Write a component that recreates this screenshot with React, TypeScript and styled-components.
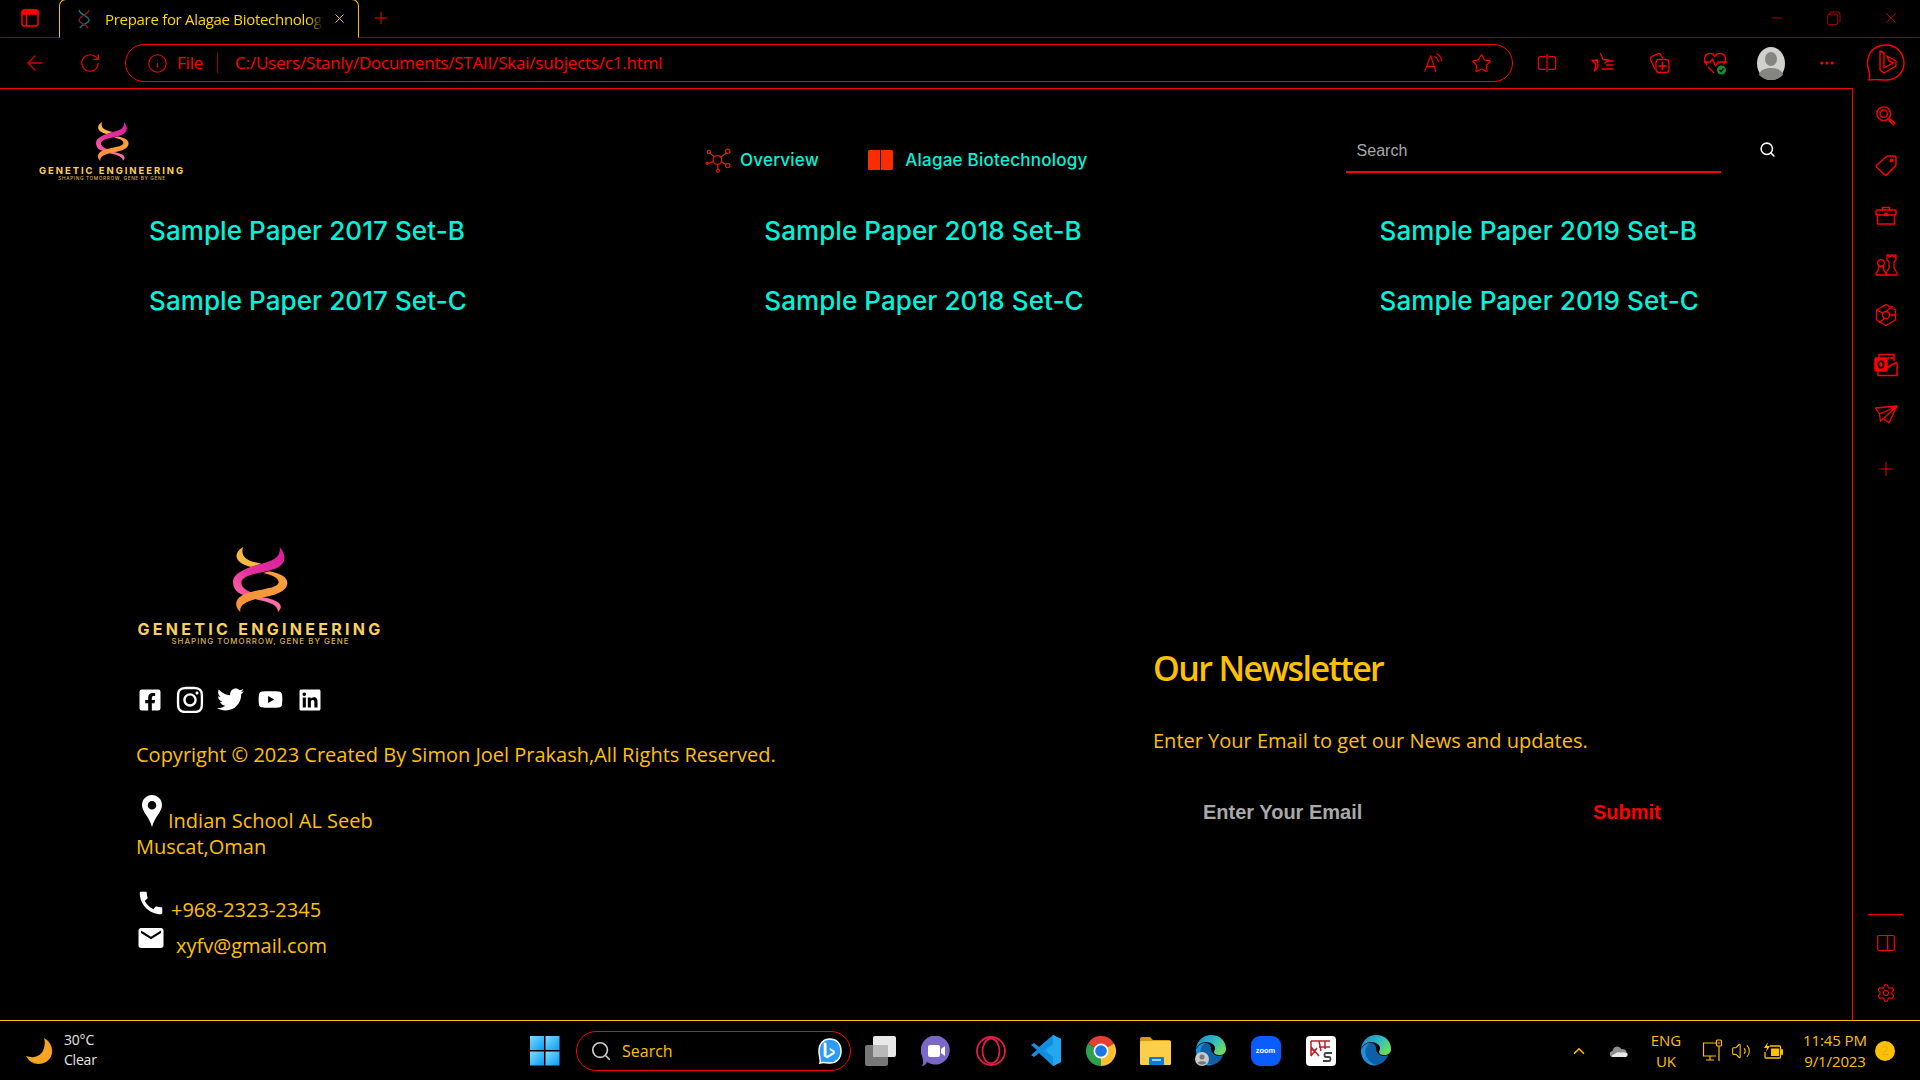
import React from 'react'
import styled, { createGlobalStyle } from 'styled-components'
import {
  ArrowLeft, RotateCw, Info, Plus, X, Minus, Star, Search as SearchIcon, Ellipsis, ChevronUp, Settings, Volume2,
} from 'lucide-react'
import { FaFacebookSquare, FaInstagram, FaTwitter, FaYoutube, FaLinkedin } from 'react-icons/fa'
import { MdCall, MdEmail } from 'react-icons/md'

const RED = '#ff0000'
const GOLD = '#ffc000'
const CYAN = '#00f4dc'
const CHROME_FONT = '"Open Sans", "Noto Sans", sans-serif'

const GlobalStyle = createGlobalStyle`
  html, body { margin: 0; padding: 0; background: #000; }
  body { width: 1920px; height: 1080px; overflow: hidden; font-family: "Open Sans", sans-serif; }
  * { box-sizing: border-box; }
`

const Shell = styled.div`
  width: 1920px;
  height: 1080px;
  display: flex;
  flex-direction: column;
  background: #000;
`

/* ---- window chrome ---- */

const TitleBar = styled.div`
  height: 38px;
  flex: none;
  display: flex;
  align-items: flex-end;
  border-bottom: 1px solid #3c2c00;
`

const WindowMenu = styled.div`
  width: 59px;
  height: 38px;
  display: flex;
  align-items: center;
  justify-content: center;
`

const Tab = styled.div`
  width: 300px;
  height: 39px;
  margin-bottom: -1px;
  display: flex;
  align-items: center;
  padding: 0 11px 0 18px;
  border: 1px solid ${GOLD};
  border-bottom: 1px solid #000;
  border-radius: 7px 7px 0 0;
  background: #000;
`

const TabTitle = styled.span`
  flex: 1;
  margin: 0 8px 0 15px;
  overflow: hidden;
  white-space: nowrap;
  color: #ffd800;
  font: 15px/20px ${CHROME_FONT};
  letter-spacing: -0.3px;
  mask-image: linear-gradient(to right, #000 92%, transparent);
`

const NewTab = styled.div`
  width: 44px;
  height: 38px;
  display: flex;
  align-items: center;
  justify-content: center;
`

const WindowControls = styled.div`
  margin-left: auto;
  height: 38px;
  display: flex;
  align-items: center;
  padding-right: 1px;
`

const WindowButton = styled.div`
  width: 57px;
  display: flex;
  justify-content: center;
`

const Toolbar = styled.div`
  height: 50px;
  flex: none;
  display: flex;
  align-items: center;
  padding-left: 12px;
`

const NavButton = styled.div`
  width: 46px;
  display: flex;
  justify-content: center;
  margin-right: 9px;
`

const Omnibox = styled.div`
  width: 1388px;
  height: 38px;
  margin-left: 3px;
  display: flex;
  align-items: center;
  padding: 0 20px 0 21px;
  border: 1px solid ${RED};
  border-radius: 19px;
  color: ${RED};
  font: 17px/22px ${CHROME_FONT};
`

const FileLabel = styled.span`
  margin-left: 9px;
  letter-spacing: -0.2px;
`

const Divider = styled.span`
  width: 1px;
  height: 20px;
  margin: 0 17px 0 14px;
  background: #9c0000;
`

const UrlText = styled.span`
  flex: 1;
  letter-spacing: -0.2px;
`

const OmniIcons = styled.div`
  display: flex;
  align-items: center;
  gap: 27px;
`

const ToolIcons = styled.div`
  display: flex;
  align-items: center;
  margin-left: 6px;
`

const ToolSlot = styled.div`
  width: 56px;
  display: flex;
  justify-content: center;
  align-items: center;
`

const BingSlot = styled(ToolSlot)`
  margin-left: 3px;
`

/* ---- page ---- */

const Middle = styled.div`
  flex: 1;
  min-height: 0;
  display: flex;
`

const Page = styled.main`
  width: 1853px;
  border-top: 1px solid ${RED};
  border-right: 1px solid ${RED};
  display: flex;
  flex-direction: column;
`

const Header = styled.header`
  height: 90px;
  flex: none;
  display: flex;
  align-items: flex-start;
  padding-left: 38px;
`

const HeaderLogo = styled.div`
  padding-top: 33px;
`

const LogoBox = styled.div<{ $width: number }>`
  width: ${(p) => p.$width}px;
  display: flex;
  flex-direction: column;
  align-items: center;
`

const LogoName = styled.div<{ $size: number }>`
  white-space: nowrap;
  color: #fbd05c;
  font: 700 ${(p) => p.$size}px/1 Inter, sans-serif;
  letter-spacing: ${(p) => p.$size * 0.205}px;
  margin-top: ${(p) => p.$size * 0.55}px;
`

const LogoTagline = styled.div<{ $size: number }>`
  white-space: nowrap;
  color: #d9b04e;
  font: 500 ${(p) => p.$size}px/1 Inter, sans-serif;
  letter-spacing: ${(p) => p.$size * 0.13}px;
  margin-top: ${(p) => p.$size * 0.12}px;
`

const TopNav = styled.nav`
  display: flex;
  align-items: center;
  margin: 58px 0 0 519px;
`

const NavItem = styled.a<{ $gap: number }>`
  display: flex;
  align-items: center;
  gap: ${(p) => p.$gap}px;
  margin-right: 49px;
  color: ${CYAN};
  font: 500 17px/20px Inter, sans-serif;
  letter-spacing: 0.25px;
`

const SearchBox = styled.div`
  width: 375px;
  height: 84px;
  margin-left: 209px;
  padding: 50px 11px 0;
  border-bottom: 2px solid ${RED};
  color: #aaa;
  font: 16px/24px "Liberation Sans", Arial, sans-serif;
`

const SearchButton = styled.div`
  margin: 52px 0 0 38px;
  width: 20px;
  color: #fff;
`

const Papers = styled.section`
  display: grid;
  grid-template-columns: repeat(3, 615.3px);
  grid-auto-rows: 70px;
  padding: 35px 0 0 149px;
`

const PaperLink = styled.a`
  color: ${CYAN};
  font: 500 26px/34px Inter, sans-serif;
  letter-spacing: 0.08px;
  white-space: nowrap;
`

const Footer = styled.footer`
  display: flex;
  margin-top: 193px;
`

const FooterLeft = styled.div`
  width: 1153px;
  padding-left: 136px;
  color: ${GOLD};
  font: 20px/26px "Open Sans", sans-serif;
`

const Socials = styled.div`
  display: flex;
  align-items: center;
  gap: 12px;
  margin: 39px 0 0;
  color: #fff;
  height: 30px;
`

const SocialSlot = styled.span`
  width: 28px;
  display: flex;
  justify-content: center;
`

const Copyright = styled.p`
  margin: 27px 0 0;
`

const Address = styled.address`
  margin-top: 27px;
  font-style: normal;
`

const AddressLine = styled.div`
  display: flex;
  align-items: flex-end;
`

const PinWrap = styled.span`
  display: flex;
  margin: 0 6px 7px 6px;
`

const ContactRow = styled.div<{ $gap: number; $top: number }>`
  display: flex;
  align-items: flex-end;
  gap: ${(p) => p.$gap}px;
  margin-top: ${(p) => p.$top}px;
`

const IconWhite = styled.span<{ $lift: number }>`
  display: flex;
  color: #fff;
  margin-bottom: ${(p) => p.$lift}px;
`

const Newsletter = styled.div`
  padding-top: 97px;
  color: ${GOLD};
`

const NewsTitle = styled.h2`
  margin: 0;
  font: 600 34px/48px "Open Sans", sans-serif;
  letter-spacing: -1.6px;
`

const NewsText = styled.p`
  margin: 35px 0 0;
  font: 20px/28px "Open Sans", sans-serif;
`

const NewsForm = styled.div`
  display: flex;
  margin-top: 44px;
  padding-left: 50px;
  font: 700 20px/26px "Liberation Sans", Arial, sans-serif;
`

const EmailHint = styled.span`
  width: 390px;
  color: #a9a9a9;
`

const SubmitText = styled.span`
  color: ${RED};
`

/* ---- edge sidebar ---- */

const Sidebar = styled.aside`
  flex: 1;
  display: flex;
  flex-direction: column;
  align-items: center;
  padding-right: 2px;
`

const SideStack = styled.div`
  display: flex;
  flex-direction: column;
  align-items: center;
  gap: 26px;
  padding-top: 17px;
`

const SideAdd = styled.div`
  display: flex;
  margin-top: 5px;
`

const SideRule = styled.div`
  width: 35px;
  height: 1px;
  margin-top: auto;
  background: ${RED};
`

const SideBottom = styled.div`
  display: flex;
  flex-direction: column;
  align-items: center;
  gap: 30px;
  padding: 18px 0 17px;
`

/* ---- taskbar ---- */

const Taskbar = styled.div`
  height: 60px;
  flex: none;
  display: flex;
  align-items: center;
  border-top: 1px solid ${GOLD};
`

const Weather = styled.div`
  width: 530px;
  display: flex;
  align-items: center;
  gap: 10px;
  padding-left: 26px;
`

const WeatherText = styled.div`
  color: #e6e6e6;
  font: 14px/20px ${CHROME_FONT};
  letter-spacing: -0.2px;
  margin-top: -2px;
`

const WinStart = styled.div`
  width: 46px;
  display: flex;
`

const TaskSearch = styled.div`
  width: 275px;
  height: 40px;
  display: flex;
  align-items: center;
  padding: 0 8px 0 13px;
  border: 1px solid ${RED};
  border-radius: 20px;
  color: ${GOLD};
  font: 16px/22px ${CHROME_FONT};
`

const TaskSearchLabel = styled.span`
  flex: 1;
  margin-left: 10px;
`

const TaskApps = styled.div`
  display: flex;
  align-items: center;
  margin-left: 2px;
`

const AppSlot = styled.div`
  width: 55px;
  display: flex;
  justify-content: center;
  align-items: center;
`

const ZoomTile = styled.div`
  width: 30px;
  height: 30px;
  display: flex;
  align-items: center;
  justify-content: center;
  border-radius: 9px;
  background: #0b5cff;
  color: #fff;
  font: 700 7.5px/1 "Liberation Sans", sans-serif;
`

const Tray = styled.div`
  margin-left: auto;
  display: flex;
  align-items: center;
  color: ${GOLD};
  padding-right: 25px;
`

const TrayIcon = styled.div<{ $width: number }>`
  width: ${(p) => p.$width}px;
  display: flex;
  justify-content: center;
`

const Lang = styled.div`
  width: 50px;
  margin-right: 8px;
  text-align: center;
  font: 15px/21px ${CHROME_FONT};
`

const Clock = styled.div`
  width: 76px;
  margin-left: 6px;
  text-align: center;
  white-space: nowrap;
  font: 15px/21px ${CHROME_FONT};
  letter-spacing: -0.1px;
`

const Badge = styled.div`
  width: 20px;
  height: 20px;
  margin-left: 2px;
  border-radius: 50%;
  background: ${GOLD};
  color: #e7a800;
  text-align: center;
  font: 12px/20px ${CHROME_FONT};
`

/* ---- drawings ---- */

const Line: React.FC<{ size?: number; color?: string; w?: number; children: React.ReactNode }> = ({
  size = 24, color = RED, w = 1.5, children,
}) => (
  <svg width={size} height={size} viewBox="0 0 24 24" fill="none" stroke={color} strokeWidth={w} strokeLinejoin="round" strokeLinecap="round">
    {children}
  </svg>
)

const Helix: React.FC<{ width: number; id: string }> = ({ width, id }) => (
  <svg width={width} height={width * 1.18} viewBox="0 0 165 195">
    <defs>
      <linearGradient id={`${id}p`} x1="1" y1="0" x2="0" y2="1">
        <stop offset="0" stopColor="#d81f9f" />
        <stop offset="0.6" stopColor="#e62f9f" />
        <stop offset="1" stopColor="#ff6aa5" />
      </linearGradient>
      <linearGradient id={`${id}o`} x1="1" y1="0" x2="0" y2="1">
        <stop offset="0" stopColor="#f7a03a" />
        <stop offset="1" stopColor="#fb8f36" />
      </linearGradient>
    </defs>
    <path d="M30 0C5 15-5 45 55 60L85 50C40 42 22 30 30 0Z" fill="#f9b840" />
    <path d="M60 147C110 152 165 165 135 195 135 175 110 165 70 158Z" fill="#f86fa8" />
    <path d="M140 0C165 30 160 60 105 72 70 80 25 85 25 108 25 125 50 135 78 145L58 150C25 146 0 135 0 105 0 75 50 60 85 50 120 42 145 30 140 0Z" fill={`url(#${id}p)`} />
    <path d="M110 73C145 80 165 92 163 110 160 140 110 148 75 155 40 162 18 175 22 195 5 180 0 155 40 140 80 125 137 125 137 105 137 92 115 83 90 78Z" fill={`url(#${id}o)`} />
  </svg>
)

const Logo: React.FC<{ big?: boolean }> = ({ big }) => (
  <LogoBox $width={big ? 249 : 148}>
    <Helix width={big ? 55 : 33} id={big ? 'a' : 'b'} />
    <LogoName $size={big ? 16 : 9.5}>GENETIC ENGINEERING</LogoName>
    <LogoTagline $size={big ? 7.9 : 4.75}>SHAPING TOMORROW, GENE BY GENE</LogoTagline>
  </LogoBox>
)

const Molecule = () => (
  <Line size={26} color="#d42600" w={1.1}>
    <circle cx="11.5" cy="12" r="4" />
    <circle cx="21" cy="4" r="2" />
    <circle cx="21" cy="17" r="2" />
    <circle cx="3.5" cy="4.5" r="1.5" />
    <circle cx="12" cy="22" r="1.3" />
    <circle cx="2" cy="15" r="1" />
    <path d="M14.5 9.5 19.5 5.5M15 13.5l4 2.5M8.5 9 4.5 5.5M11.8 16v4.5M7.8 13.5 3 15" />
  </Line>
)

const BookIcon = () => (
  <svg width="25" height="20" viewBox="0 0 25 20">
    <path d="M1.5 0H12v20H1.5A1.5 1.5 0 0 1 0 18.5v-17A1.5 1.5 0 0 1 1.5 0ZM13 0h10.5A1.5 1.5 0 0 1 25 1.5v17a1.5 1.5 0 0 1-1.5 1.5H13Z" fill="#fa2c00" />
  </svg>
)

const PinIcon = () => (
  <svg width="20" height="32" viewBox="0 0 20 32">
    <path fillRule="evenodd" d="M10 0C4.5 0 0 4.400 0 10c0 7 7 11 10 22 3-11 10-15 10-22C20 4.400 15.500 0 10 0Zm0 6a4.300 4.300 0 1 1 0 8.600A4.300 4.300 0 0 1 10 6Z" fill="#fff" />
  </svg>
)

const TabFavicon = () => (
  <svg width="12" height="20" viewBox="0 0 12 20" fill="none" strokeWidth="1.3">
    <path d="M1 1C2 6 11 7 11 11 11 15 3 15 2 19" stroke="#0d7f86" />
    <path d="M11 1C10 6 1 7 1 11 1 15 9 15 10 19" stroke="#8c1b22" />
  </svg>
)

const WinMenuIcon = () => (
  <svg width="18" height="18" viewBox="0 0 18 18" fill="none" stroke={RED} strokeWidth="1.5">
    <rect x="1" y="1" width="16" height="16" rx="2.5" />
    <path d="M1 3.5A2.5 2.5 0 0 1 3.5 1h11A2.5 2.5 0 0 1 17 3.5V5H1Z" fill={RED} />
    <path d="M5.5 5v12" />
  </svg>
)

const RestoreIcon = () => (
  <Line size={16} w={1}>
    <rect x="2.5" y="6" width="15" height="16" rx="2.5" />
    <path d="M6 3h11.5A3.5 3.5 0 0 1 21 6.5V18" />
  </Line>
)

const ReadAloud = () => (
  <Line size={22} w={1.2}>
    <path d="M3 21 9.5 4 15 21M5 16h9" />
    <path d="M14 5c2 1 3.5 3 4 5.5M16 2c3 1.5 5 4 5.5 7.5" />
  </Line>
)

const SplitIcon = () => (
  <Line size={22} w={1.3}>
    <path d="M10 5H5a2.5 2.5 0 0 0-2.5 2.5v9A2.5 2.5 0 0 0 5 19h5M14 5h5a2.5 2.5 0 0 1 2.5 2.5v9A2.5 2.5 0 0 1 19 19h-5M12 2.5v19" />
  </Line>
)

const FavListIcon = () => (
  <Line size={24} w={1.3}>
    <path d="M9.5 2.5 12 8.5l5.5.5-3.500 3M7 16l-3.500 4 1.500-6.500-4-4 5.500-.5Z" />
    <path d="M15.5 10H22M15.5 14H22M11 18H22" />
  </Line>
)

const CollectionsIcon = () => (
  <Line size={24} w={1.3}>
    <path d="M8 18 3.5 9a2.5 2.5 0 0 1 1.3-3.3L11 2.7a2.5 2.5 0 0 1 3 1.2l1.5 3" />
    <rect x="9" y="8.5" width="13" height="13" rx="3" />
    <path d="M15.5 11.5v7M12 15h7" strokeWidth="1.7" />
  </Line>
)

const HealthIcon = () => (
  <svg width="26" height="26" viewBox="0 0 26 26" fill="none" stroke={RED} strokeWidth="1.3" strokeLinejoin="round">
    <path d="M5 15C1 10 2 4 7.5 3.5 10 3.3 12 4.5 13 6.5 14 4.5 16 3.3 18.5 3.5 24 4 25 10 21.5 14.5" />
    <path d="M2 12h6l2.5-3 3 7 2.5-4h9M6 17l6 6" />
    <circle cx="19.5" cy="20" r="4.5" fill="#1a8c2e" stroke="none" />
    <path d="m17.5 20 1.5 1.5 2.5-3" stroke="#000" />
  </svg>
)

const Avatar = () => (
  <svg width="28" height="33" viewBox="0 0 28 33">
    <ellipse cx="14" cy="16.5" rx="14" ry="16.5" fill="#d0d0cc" />
    <ellipse cx="14" cy="12" rx="6" ry="7" fill="#858582" />
    <path d="M2 28C3 23 8 21 14 21S25 23 26 28C23 31 19 33 14 33S5 31 2 28Z" fill="#858582" />
  </svg>
)

const BingChat = () => (
  <svg width="38" height="38" viewBox="0 0 38 38" fill="none" stroke={RED} strokeWidth="1.4" strokeLinejoin="round">
    <path d="M2 36C3 33 3 31 2 27 0 22 0 15 3 9 7 3 13 1 19 1 29 1 37 9 37 19 37 29 29 36 19 36 13 36 7 35 2 36Z" />
    <path d="M13 7l4 2v15l9-5-4-2-2-5 9 5v5l-12 7-4-3Z" />
  </svg>
)

const SideSearch = () => (
  <Line size={22}>
    <circle cx="9.5" cy="9.5" r="7.5" />
    <circle cx="9.5" cy="9.5" r="4" />
    <path d="m15 15 2 2M17 15.5l4.5 4.5-1.5 1.5-4.5-4.5Z" />
  </Line>
)

const SideTag = () => (
  <Line size={24}>
    <path d="M14 3h6a2 2 0 0 1 2 2v6a2 2 0 0 1-.5 1.5L13 21.5a2 2 0 0 1-2.8 0L3 14.500a2 2 0 0 1 0-2.800l9.500-8.200A2 2 0 0 1 14 3Z" />
    <circle cx="17.5" cy="7.5" r="1.2" fill={RED} />
  </Line>
)

const SideCase = () => (
  <Line size={24}>
    <rect x="2" y="7" width="20" height="5" rx="1" />
    <path d="M3.5 12v9h17v-9M8.5 7V4.5h7V7" />
    <circle cx="12" cy="11.5" r="1.3" fill={RED} />
  </Line>
)

const SideChess = () => (
  <Line size={24} w={1.3}>
    <path d="M13 2h2v1.5h2V2h2v1.5h2V2h1v5l-2 2v6l3 5v2H12v-2l3-5V9l-2-2Z" />
    <circle cx="7" cy="10" r="3.3" />
    <path d="M5 13.5h4l1 4 2 2.5v2H2v-2l2-2.500Z" />
  </Line>
)

const SideHex = () => (
  <Line size={24} w={1.3}>
    <path d="M12 1.5 21.5 7v10L12 22.5 2.500 17V7Z" />
    <circle cx="12" cy="12" r="3.5" />
    <path d="M2.500 7 9 10M15.500 12H21.500M10 15.500 5.500 19.500M12 8.500 18 3.500" />
  </Line>
)

const SideOutlook = () => (
  <svg width="24" height="24" viewBox="0 0 24 24" fill="none" stroke={RED} strokeWidth="1.5" strokeLinejoin="round">
    <path d="M5 5V1.5h15V8M4 18v4.500h19V10" />
    <rect x="1" y="5" width="12" height="13" rx="1.5" fill={RED} />
    <ellipse cx="7" cy="11.5" rx="2.6" ry="3.3" stroke="#000" strokeWidth="1.8" />
    <path d="M4 18 14 14l9-5M13 5h7" />
  </svg>
)

const SidePlane = () => (
  <Line size={24} w={1.3}>
    <path d="M1.5 5 23 3 15 20 9.500 15.500 6.500 18 5.500 11ZM23 3 5.500 11M23 3 9.500 15.500" />
  </Line>
)

const SidePanel = () => (
  <Line size={20} w={1.4}>
    <rect x="2" y="3" width="20" height="18" rx="2" />
    <path d="M14 3v18" />
  </Line>
)

const WinLogo = () => (
  <svg width="30" height="30" viewBox="0 0 30 30">
    <defs>
      <linearGradient id="win" x1="0" y1="0" x2="1" y2="1">
        <stop offset="0" stopColor="#7fdcff" />
        <stop offset="1" stopColor="#0a9bf0" />
      </linearGradient>
    </defs>
    <rect width="14" height="14" fill="url(#win)" />
    <rect x="15.5" width="14" height="14" fill="url(#win)" />
    <rect y="15.5" width="14" height="14" fill="url(#win)" />
    <rect x="15.5" y="15.5" width="14" height="14" fill="url(#win)" />
  </svg>
)

const Moon = () => (
  <svg width="28" height="28" viewBox="0 0 28 28">
    <path d="M18 1C28 6 29 20 20 25 13 29 4 27 0 19 8 22 16 19 18 11 19 7 19 4 18 1Z" fill="#f7a424" />
  </svg>
)

const BingBadge = () => (
  <svg width="24" height="28" viewBox="0 0 24 28">
    <path d="M2 26C3 23 1 20 1 14 1 6 6 2 12 2s11 4 11 12-5 12-11 12c-4 0-7-1-10 0Z" fill="#2c9cf5" stroke="#fff" strokeWidth="1.5" />
    <path d="M8.5 6v13l7-4-3-1.300-1.300-3 5.500 3v3l-7.500 4.500-3.500-2V5.500Z" fill="#fff" />
  </svg>
)

const TaskView = () => (
  <svg width="31" height="30" viewBox="0 0 31 30">
    <rect x="8" y="0" width="23" height="21" rx="2" fill="#e8e8e8" />
    <rect x="0" y="9" width="23" height="21" rx="2" fill="#777" />
    <rect x="8" y="9" width="15" height="12" fill="#b9b9b9" />
  </svg>
)

const MeetIcon = () => (
  <svg width="30" height="30" viewBox="0 0 30 30">
    <path d="M1 30C3 27 2 24 1 20A14.5 14.5 0 1 1 6 26C5 28 3 30 1 30Z" fill="#7b68c6" />
    <rect x="7" y="9" width="12" height="12" rx="2" fill="#fff" />
    <path d="m20 13 4-3v10l-4-3Z" fill="#fff" />
  </svg>
)

const OperaIcon = () => (
  <svg width="30" height="30" viewBox="0 0 30 30" fill="none" stroke="#e31b45" strokeWidth="1.8">
    <circle cx="15" cy="15" r="14" />
    <ellipse cx="15" cy="15" rx="8.5" ry="12.5" />
  </svg>
)

const VsCodeIcon = () => (
  <svg width="30" height="31" viewBox="0 0 30 31">
    <path d="M22 0 30 4v23l-8 4L8 18l-5 4-3-2 6-5-6-5 3-2 5 4Z" fill="#0f8fe0" />
    <path d="M22 0 30 4v23l-8 4Zm0 9-8 6.5 8 6.5Z" fill="#22a7f0" fillRule="evenodd" />
  </svg>
)

const ChromeIcon = () => (
  <svg width="30" height="30" viewBox="0 0 30 30">
    <path d="M15 15 2 7.5A15 15 0 0 1 28 7.5Z" fill="#e53f33" />
    <path d="M15 15 28 7.5A15 15 0 0 1 15 30Z" fill="#fbc02d" />
    <path d="M15 15 15 30A15 15 0 0 1 2 7.5Z" fill="#2e9e4f" />
    <circle cx="15" cy="15" r="7.5" fill="#fff" />
    <circle cx="15" cy="15" r="5.8" fill="#1a73e8" />
  </svg>
)

const FolderIcon = () => (
  <svg width="31" height="28" viewBox="0 0 31 28">
    <path d="M0 2a2 2 0 0 1 2-2h8l3 3h16a2 2 0 0 1 2 2v3H0Z" fill="#d99a0b" />
    <rect y="4" width="31" height="24" rx="1.5" fill="#fdce4a" />
    <rect x="9" y="20" width="15" height="8" rx="1" fill="#0a7cd4" />
    <rect x="12" y="22" width="9" height="2" fill="#8fd3ff" />
  </svg>
)

const EdgeIcon: React.FC<{ id: string; profile?: boolean }> = ({ id, profile }) => (
  <svg width="31" height="31" viewBox="0 0 31 31">
    <defs>
      <linearGradient id={id} x1="0" y1="0" x2="1" y2="0.6">
        <stop offset="0" stopColor="#1585d0" />
        <stop offset="0.6" stopColor="#33bcc2" />
        <stop offset="1" stopColor="#6fdc5c" />
      </linearGradient>
    </defs>
    <path d="M1 14C2 6 8 0 16 0c9 0 15 6 15 14 0 4-3 6-7 6-3 0-5-1-5-3 0-1 1-2 1-4 0-3-4-6-9-6S3 10 1 14Z" fill={`url(#${id})`} />
    <path d="M1 14c3-4 6-6 9-6 4 0 6 2 6 5 0 5 5 10 12 7-2 7-9 11-15 10C6 29 0 22 1 14Z" fill="#0f5fa8" />
    <path d="M10 8c-5 3-6 10-3 15 2 3 5 6 10 7-6 2-16-3-16-15 2-4 5-7 9-7Z" fill="#1a8fdc" />
    {profile && (
      <>
        <circle cx="7" cy="24" r="7" fill="#c9c9c9" />
        <circle cx="7" cy="22" r="2.5" fill="#777" />
        <path d="M2.5 28c1-2.5 8-2.5 9 0a7 7 0 0 1-9 0Z" fill="#777" />
      </>
    )}
  </svg>
)

const KsIcon = () => (
  <svg width="30" height="30" viewBox="0 0 30 30" fill="none">
    <rect width="30" height="30" rx="4" fill="#fff" />
    <path d="M5 5h19M5 5v15M5 11l8 9M13 5l2 10M19 5v8M5 14h5M13 11h11M5 20l6-8" stroke="#b5222a" strokeWidth="1.5" />
    <path d="M26 17h-6c-2 0-2 4 0 4h3c2 0 2 4 0 4h-6" stroke="#444" strokeWidth="1.8" />
  </svg>
)

const OneDrive = () => (
  <svg width="18" height="12" viewBox="0 0 18 12">
    <path d="M3 12a3 3 0 0 1-.5-6C3 3 5 1.5 7 1.5c2 0 3.5 1 4.2 2.700C14 3.800 16 5 16.500 7Z" fill="#8f8f8f" />
    <path d="M3 12c-1 0-1.500-.5-1-1.500L7 7.500c1-.5 2-.5 3 0 2 0 6-1 7 .5 1.500 2 0 4-1.500 4Z" fill="#e8e8e8" />
  </svg>
)

const MonitorPlug = () => (
  <svg width="22" height="24" viewBox="0 0 22 24" fill="none" stroke={GOLD} strokeWidth="1.2">
    <path d="M14 4H1.5v13H14M8 17v4M4 21h8" />
    <rect x="14.5" y="1" width="5" height="6" rx="1" />
    <path d="M17 7v15M16 4h2" />
  </svg>
)

const BatteryBolt = () => (
  <svg width="20" height="18" viewBox="0 0 20 18" fill="none" stroke={GOLD} strokeWidth="1.3">
    <path d="M7 4h9.5a1 1 0 0 1 1 1v10a1 1 0 0 1-1 1H3a1 1 0 0 1-1-1V10" />
    <rect x="8" y="6.5" width="8" height="7.5" fill={GOLD} stroke="none" />
    <path d="M18 8h2v4h-2" fill={GOLD} />
    <path d="M5 0 1 6h3L3 10l4-6H4Z" fill={GOLD} stroke="none" />
  </svg>
)

const papers = [
  'Sample Paper 2017 Set-B',
  'Sample Paper 2018 Set-B',
  'Sample Paper 2019 Set-B',
  'Sample Paper 2017 Set-C',
  'Sample Paper 2018 Set-C',
  'Sample Paper 2019 Set-C',
]

export default function App() {
  return (
    <Shell>
      <GlobalStyle />
      <TitleBar>
        <WindowMenu><WinMenuIcon /></WindowMenu>
        <Tab>
          <TabFavicon />
          <TabTitle>Prepare for Alagae Biotechnology</TabTitle>
          <X size={15} color="#ffd800" strokeWidth={1.5} />
        </Tab>
        <NewTab><Plus size={20} color={RED} strokeWidth={1.2} /></NewTab>
        <WindowControls>
          <WindowButton><Minus size={16} color={RED} strokeWidth={1} /></WindowButton>
          <WindowButton><RestoreIcon /></WindowButton>
          <WindowButton><X size={18} color={RED} strokeWidth={1} /></WindowButton>
        </WindowControls>
      </TitleBar>
      <Toolbar>
        <NavButton><ArrowLeft size={24} color="#d40000" strokeWidth={1.3} /></NavButton>
        <NavButton><RotateCw size={22} color={RED} strokeWidth={1.3} /></NavButton>
        <Omnibox>
          <Info size={21} strokeWidth={1.2} />
          <FileLabel>File</FileLabel>
          <Divider />
          <UrlText>C:/Users/Stanly/Documents/STAII/Skai/subjects/c1.html</UrlText>
          <OmniIcons>
            <ReadAloud />
            <Star size={21} strokeWidth={1.3} />
          </OmniIcons>
        </Omnibox>
        <ToolIcons>
          <ToolSlot><SplitIcon /></ToolSlot>
          <ToolSlot><FavListIcon /></ToolSlot>
          <ToolSlot><CollectionsIcon /></ToolSlot>
          <ToolSlot><HealthIcon /></ToolSlot>
          <ToolSlot><Avatar /></ToolSlot>
          <ToolSlot><Ellipsis size={18} color={RED} /></ToolSlot>
          <BingSlot><BingChat /></BingSlot>
        </ToolIcons>
      </Toolbar>
      <Middle>
        <Page>
          <Header>
            <HeaderLogo><Logo /></HeaderLogo>
            <TopNav>
              <NavItem $gap={9}><Molecule />Overview</NavItem>
              <NavItem $gap={12}><BookIcon />Alagae Biotechnology</NavItem>
            </TopNav>
            <SearchBox>Search</SearchBox>
            <SearchButton><SearchIcon size={17} strokeWidth={2.2} /></SearchButton>
          </Header>
          <Papers>
            {papers.map((p) => <div key={p}><PaperLink>{p}</PaperLink></div>)}
          </Papers>
          <Footer>
            <FooterLeft>
              <Logo big />
              <Socials>
                <SocialSlot><FaFacebookSquare size={24} /></SocialSlot>
                <SocialSlot><FaInstagram size={30} /></SocialSlot>
                <SocialSlot><FaTwitter size={27} /></SocialSlot>
                <SocialSlot><FaYoutube size={25} /></SocialSlot>
                <SocialSlot><FaLinkedin size={24} /></SocialSlot>
              </Socials>
              <Copyright>Copyright © 2023 Created By Simon Joel Prakash,All Rights Reserved.</Copyright>
              <Address>
                <AddressLine>
                  <PinWrap><PinIcon /></PinWrap>
                  Indian School AL Seeb
                </AddressLine>
                Muscat,Oman
              </Address>
              <ContactRow $gap={5} $top={28}>
                <IconWhite $lift={5}><MdCall size={30} /></IconWhite>
                +968-2323-2345
              </ContactRow>
              <ContactRow $gap={10} $top={0}>
                <IconWhite $lift={6}><MdEmail size={30} /></IconWhite>
                xyfv@gmail.com
              </ContactRow>
            </FooterLeft>
            <Newsletter>
              <NewsTitle>Our Newsletter</NewsTitle>
              <NewsText>Enter Your Email to get our News and updates.</NewsText>
              <NewsForm>
                <EmailHint>Enter Your Email</EmailHint>
                <SubmitText>Submit</SubmitText>
              </NewsForm>
            </Newsletter>
          </Footer>
        </Page>
        <Sidebar>
          <SideStack>
            <SideSearch />
            <SideTag />
            <SideCase />
            <SideChess />
            <SideHex />
            <SideOutlook />
            <SidePlane />
            <SideAdd><Plus size={22} color={RED} strokeWidth={1} /></SideAdd>
          </SideStack>
          <SideRule />
          <SideBottom>
            <SidePanel />
            <Settings size={20} color={RED} strokeWidth={1.4} />
          </SideBottom>
        </Sidebar>
      </Middle>
      <Taskbar>
        <Weather>
          <Moon />
          <WeatherText>30°C<br />Clear</WeatherText>
        </Weather>
        <WinStart><WinLogo /></WinStart>
        <TaskSearch>
          <SearchIcon size={22} color="#ccc" strokeWidth={1.8} />
          <TaskSearchLabel>Search</TaskSearchLabel>
          <BingBadge />
        </TaskSearch>
        <TaskApps>
          <AppSlot><TaskView /></AppSlot>
          <AppSlot><MeetIcon /></AppSlot>
          <AppSlot><OperaIcon /></AppSlot>
          <AppSlot><VsCodeIcon /></AppSlot>
          <AppSlot><ChromeIcon /></AppSlot>
          <AppSlot><FolderIcon /></AppSlot>
          <AppSlot><EdgeIcon id="e1" profile /></AppSlot>
          <AppSlot><ZoomTile>zoom</ZoomTile></AppSlot>
          <AppSlot><KsIcon /></AppSlot>
          <AppSlot><EdgeIcon id="e2" /></AppSlot>
        </TaskApps>
        <Tray>
          <TrayIcon $width={36}><ChevronUp size={18} strokeWidth={2} /></TrayIcon>
          <TrayIcon $width={44}><OneDrive /></TrayIcon>
          <Lang>ENG<br />UK</Lang>
          <TrayIcon $width={28}><MonitorPlug /></TrayIcon>
          <TrayIcon $width={28}><Volume2 size={20} strokeWidth={1.3} /></TrayIcon>
          <TrayIcon $width={36}><BatteryBolt /></TrayIcon>
          <Clock>11:45 PM<br />9/1/2023</Clock>
          <Badge>2</Badge>
        </Tray>
      </Taskbar>
    </Shell>
  )
}
